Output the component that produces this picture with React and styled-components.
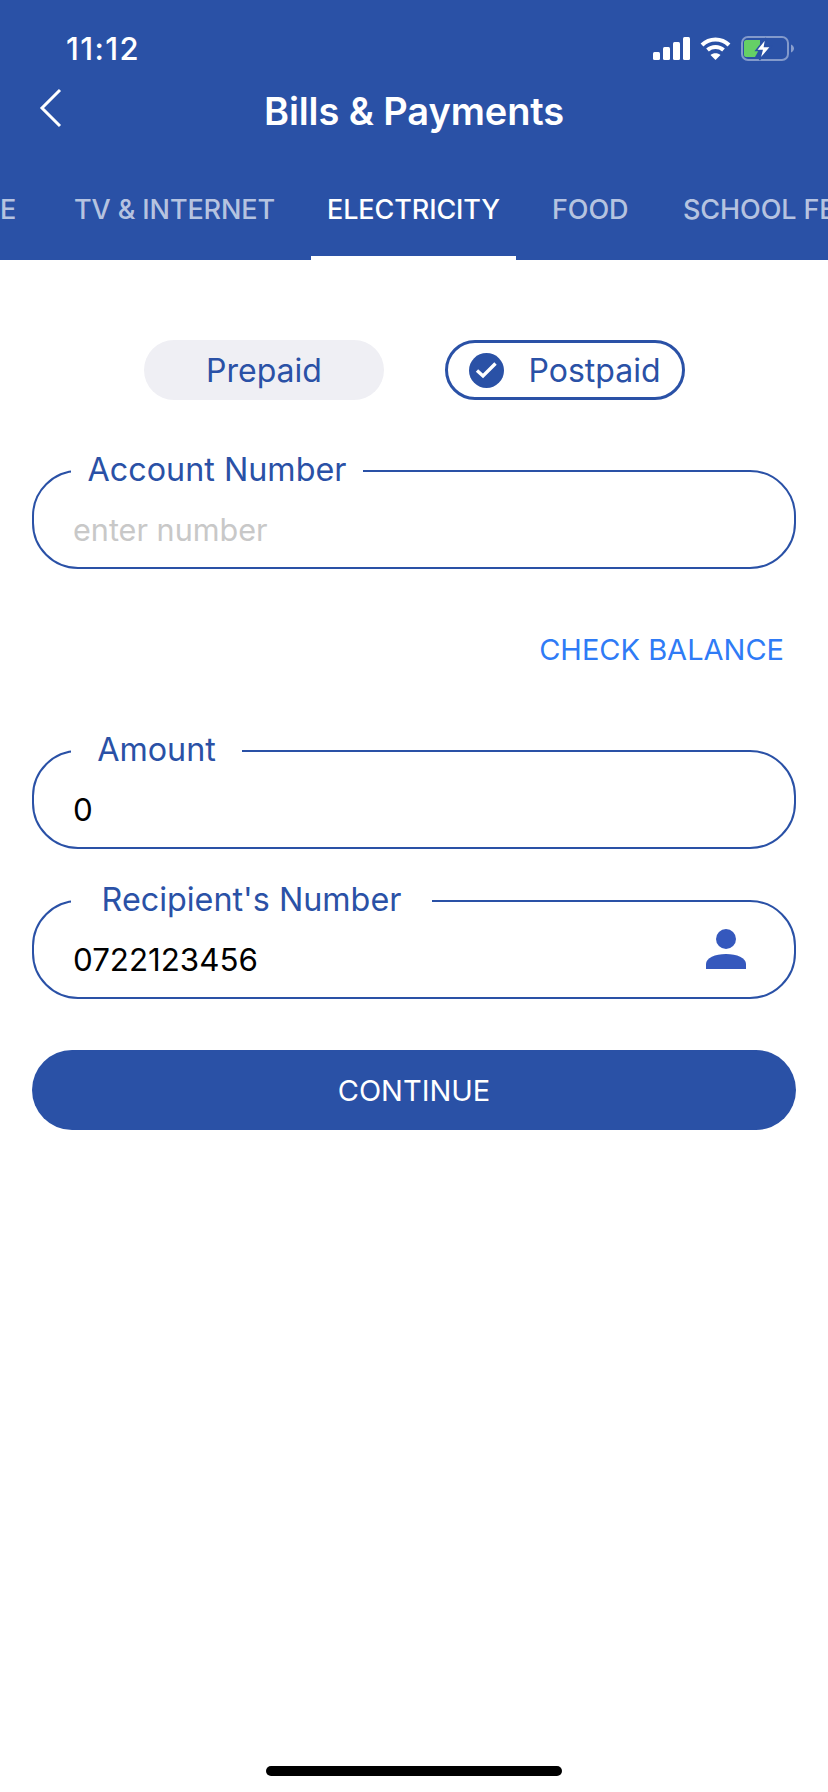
import React from 'react';
import styled, { createGlobalStyle } from 'styled-components';

const BLUE = '#2a51a6';

const GlobalStyle = createGlobalStyle`
  html, body {
    margin: 0;
    padding: 0;
    background: #fff;
  }
  body {
    font-family: Inter, "Liberation Sans", sans-serif;
  }
`;

const Screen = styled.div`
  width: 828px;
  height: 1792px;
  display: flex;
  flex-direction: column;
  overflow: hidden;
  background: #fff;
`;

const Header = styled.header`
  height: 260px;
  flex-shrink: 0;
  display: flex;
  flex-direction: column;
  background: ${BLUE};
  color: #fff;
`;

const StatusBar = styled.div`
  height: 26px;
  padding: 36px 34px 0 66px;
  display: flex;
  align-items: flex-start;
  justify-content: space-between;
`;

const Time = styled.span`
  font-size: 31px;
  font-weight: 500;
  line-height: 26px;
  letter-spacing: 1.4px;
`;

const StatusIcons = styled.div`
  display: flex;
  align-items: center;
  gap: 10px;
`;

const TitleRow = styled.div`
  position: relative;
  height: 70px;
  margin-top: 14px;
  display: flex;
  align-items: center;
  justify-content: center;
`;

const BackButton = styled.svg`
  position: absolute;
  left: 38px;
  top: 12px;
`;

const Title = styled.h1`
  margin: 0;
  font-size: 38px;
  font-weight: 600;
  letter-spacing: -0.1px;
`;

const Tabs = styled.nav`
  margin-top: auto;
  height: 66px;
  display: flex;
  overflow: hidden;
`;

const Tab = styled.div`
  flex-shrink: 0;
  width: ${(p) => p.$width}px;
  margin-left: ${(p) => p.$offset}px;
  height: 66px;
  box-sizing: border-box;
  line-height: 32px;
  text-align: center;
  white-space: nowrap;
  font-size: 27px;
  font-weight: 500;
  letter-spacing: -0.1px;
  color: ${(p) => (p.$active ? '#fff' : 'rgba(255, 255, 255, 0.68)')};
  border-bottom: 4px solid ${(p) => (p.$active ? '#fff' : 'transparent')};
`;

const Content = styled.main`
  flex: 1;
  padding: 80px 32px 0;
  display: flex;
  flex-direction: column;
`;

const PlanRow = styled.div`
  display: flex;
  justify-content: center;
  gap: 61px;
  margin-left: 1px;
`;

const PlanOption = styled.div`
  width: 240px;
  height: 60px;
  box-sizing: border-box;
  border-radius: 30px;
  display: flex;
  align-items: center;
  justify-content: center;
  gap: 24px;
  font-size: 32px;
  color: ${BLUE};
  background: ${(p) => (p.$selected ? '#fff' : '#efeff4')};
  border: ${(p) => (p.$selected ? `3px solid ${BLUE}` : 'none')};
`;

const Field = styled.div`
  position: relative;
  height: 99px;
  margin-top: ${(p) => p.$top}px;
  box-sizing: border-box;
  border: 2px solid ${BLUE};
  border-radius: 46px;
  padding: 20px 39px 0;
  display: flex;
  align-items: center;
  justify-content: space-between;
`;

const FieldLabel = styled.label`
  position: absolute;
  left: 37px;
  top: -21px;
  width: ${(p) => p.$width}px;
  height: 38px;
  line-height: 38px;
  text-align: center;
  background: #fff;
  color: ${BLUE};
  font-size: 32.3px;
`;

const FieldValue = styled.span`
  font-size: ${(p) => (p.$placeholder ? '30.6px' : '31.3px')};
  color: ${(p) => (p.$placeholder ? '#c8c8c8' : '#000')};
`;

const ContactIcon = styled.svg`
  position: absolute;
  right: 48px;
  top: 27px;
`;

const CheckBalance = styled.a`
  align-self: flex-end;
  margin: 65px 12px 0 0;
  height: 32px;
  line-height: 32px;
  font-size: 29px;
  color: #2f7bf6;
`;

const ContinueButton = styled.button`
  margin-top: 51px;
  height: 80px;
  border: none;
  border-radius: 40px;
  background: ${BLUE};
  color: #fff;
  font-family: inherit;
  font-size: 29px;
`;

const HomeIndicator = styled.div`
  flex-shrink: 0;
  align-self: center;
  width: 296px;
  height: 10px;
  margin-bottom: 16px;
  border-radius: 5px;
  background: #000;
`;

function SignalIcon() {
  return (
    <svg width="37" height="23" viewBox="0 0 37 23" fill="#fff">
      <rect x="0" y="15" width="7" height="8" rx="1.5" />
      <rect x="10" y="10" width="7" height="13" rx="1.5" />
      <rect x="20" y="5" width="7" height="18" rx="1.5" />
      <rect x="30" y="0" width="7" height="23" rx="1.5" />
    </svg>
  );
}

function WifiIcon() {
  return (
    <svg width="31" height="23" viewBox="0 0 31 23" fill="none" stroke="#fff" strokeWidth="4">
      <path d="M2 8 C9.5 0.5 21.5 0.5 29 8" />
      <path d="M7.5 13 C12 9 19 9 23.5 13" />
      <path d="M15.5 23 L10.5 18 C13 15.6 18 15.6 20.5 18 Z" fill="#fff" stroke="none" />
    </svg>
  );
}

function BatteryIcon() {
  return (
    <svg width="53" height="25" viewBox="0 0 53 25">
      <rect x="1" y="1" width="46" height="23" rx="6" fill="none" stroke="rgba(255,255,255,0.42)" strokeWidth="2" />
      <path d="M50 8.5 C52 9.5 53 11 53 12.5 C53 14 52 15.5 50 16.5 Z" fill="rgba(255,255,255,0.45)" />
      <path d="M5 4 H19 V12 L14 21 H5 C4 21 3 20 3 19 V6 C3 5 4 4 5 4 Z" fill="#65d066" />
      <path d="M25 2 L15 14.5 H21 L18.5 24 L30 10.5 H23.5 Z" fill="#fff" stroke={BLUE} strokeWidth="1.5" />
    </svg>
  );
}

function CheckBadge() {
  return (
    <svg width="35" height="35" viewBox="0 0 35 35">
      <circle cx="17.5" cy="17.5" r="17.5" fill={BLUE} />
      <path d="M8 17.5 L14 23 L26.5 10.5" fill="none" stroke="#fff" strokeWidth="3.4" />
    </svg>
  );
}

export default function App() {
  return (
    <Screen>
      <GlobalStyle />
      <Header>
        <StatusBar>
          <Time>11:12</Time>
          <StatusIcons>
            <SignalIcon />
            <WifiIcon />
            <BatteryIcon />
          </StatusIcons>
        </StatusBar>
        <TitleRow>
          <BackButton width="24" height="40" viewBox="0 0 24 40" fill="none" stroke="#fff" strokeWidth="3">
            <path d="M22 2 L4 20 L22 38" />
          </BackButton>
          <Title>Bills &amp; Payments</Title>
        </TitleRow>
        <Tabs>
          <Tab $width={83} $offset={-66}>HOME</Tab>
          <Tab $width={198} $offset={57}>TV &amp; INTERNET</Tab>
          <Tab $width={205} $offset={39} $active>ELECTRICITY</Tab>
          <Tab $width={75} $offset={36}>FOOD</Tab>
          <Tab $width={185} $offset={56}>SCHOOL FEES</Tab>
        </Tabs>
      </Header>
      <Content>
        <PlanRow>
          <PlanOption>Prepaid</PlanOption>
          <PlanOption $selected>
            <CheckBadge />
            <span>Postpaid</span>
          </PlanOption>
        </PlanRow>
        <Field $top={70}>
          <FieldLabel $width={292}>Account Number</FieldLabel>
          <FieldValue $placeholder>enter number</FieldValue>
        </Field>
        <CheckBalance>CHECK BALANCE</CheckBalance>
        <Field $top={84}>
          <FieldLabel $width={171}>Amount</FieldLabel>
          <FieldValue>0</FieldValue>
        </Field>
        <Field $top={51}>
          <FieldLabel $width={361}>Recipient's Number</FieldLabel>
          <FieldValue>0722123456</FieldValue>
          <ContactIcon width="40" height="40" viewBox="0 0 40 40" fill="#3558bd">
            <circle cx="20" cy="10" r="10" />
            <path d="M0 40 V35 C0 29 9 25 20 25 C31 25 40 29 40 35 V40 Z" />
          </ContactIcon>
        </Field>
        <ContinueButton>CONTINUE</ContinueButton>
      </Content>
      <HomeIndicator />
    </Screen>
  );
}
